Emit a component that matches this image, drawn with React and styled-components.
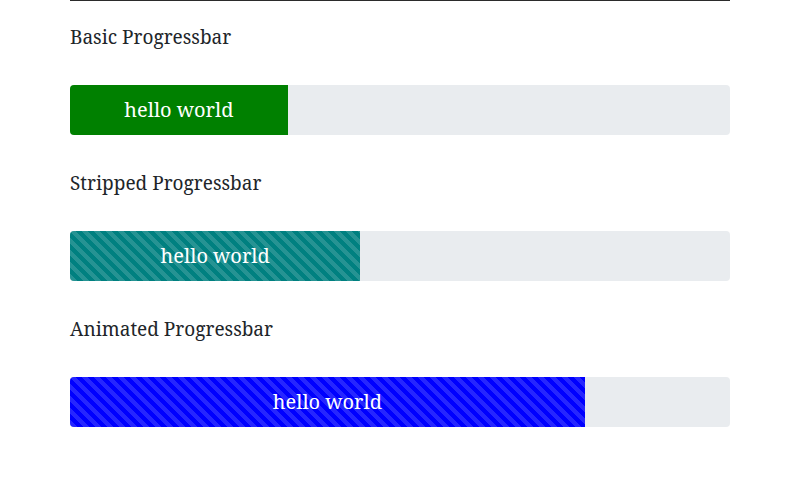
import styled, { createGlobalStyle, css, keyframes } from 'styled-components'

const GlobalStyle = createGlobalStyle`
  html, body {
    margin: 0;
    padding: 0;
    background: #ffffff;
  }
  body {
    font-family: "Noto Serif", "DejaVu Serif", "Liberation Serif", serif;
    color: #212529;
  }
`

const bars = [
  { title: 'Basic Progressbar', value: 33, color: '#008000' },
  { title: 'Stripped Progressbar', value: 44, color: '#008080', striped: true },
  { title: 'Animated Progressbar', value: 78, color: '#0000ff', striped: true, animated: true },
]

const App = () => (
  <>
    <GlobalStyle />
    <Page>
      <Rule />
      {bars.map(bar => (
        <Section key={bar.title}>
          <Label>{bar.title}</Label>
          <Track>
            <Fill
              $color={bar.color}
              $striped={bar.striped}
              $animated={bar.animated}
              style={{ width: `${bar.value}%` }}
            >
              hello world
            </Fill>
          </Track>
        </Section>
      ))}
    </Page>
  </>
)

export default App

const stripesMove = keyframes`
  from { background-position: 12px 0; }
  to { background-position: 0 0; }
`

const Page = styled.div`
  width: 660px;
  margin-left: 70px;
  display: flex;
  flex-direction: column;
`

const Rule = styled.div`
  height: 1px;
  background: #2b2b2b;
  margin-bottom: 22px;
`

const Section = styled.div`
  display: flex;
  flex-direction: column;
  gap: 34px;
  margin-bottom: 34px;
`

const Label = styled.div`
  font-size: 19px;
  line-height: 28px;
  height: 28px;
`

const Track = styled.div`
  height: 50px;
  display: flex;
  background: #e9ecef;
  border-radius: 4px;
  overflow: hidden;
`

const Fill = styled.div`
  display: flex;
  align-items: center;
  justify-content: center;
  padding-bottom: 2px;
  box-sizing: border-box;
  color: #ffffff;
  font-size: 20px;
  white-space: nowrap;
  background-color: ${p => p.$color};
  ${p =>
    p.$striped &&
    css`
      background-image: linear-gradient(
        45deg,
        rgba(255, 255, 255, 0.15) 25%,
        transparent 25%,
        transparent 50%,
        rgba(255, 255, 255, 0.15) 50%,
        rgba(255, 255, 255, 0.15) 75%,
        transparent 75%,
        transparent
      );
      background-size: 12px 12px;
    `}
  ${p =>
    p.$animated &&
    css`
      animation: ${stripesMove} 1s linear infinite;
    `}
`
